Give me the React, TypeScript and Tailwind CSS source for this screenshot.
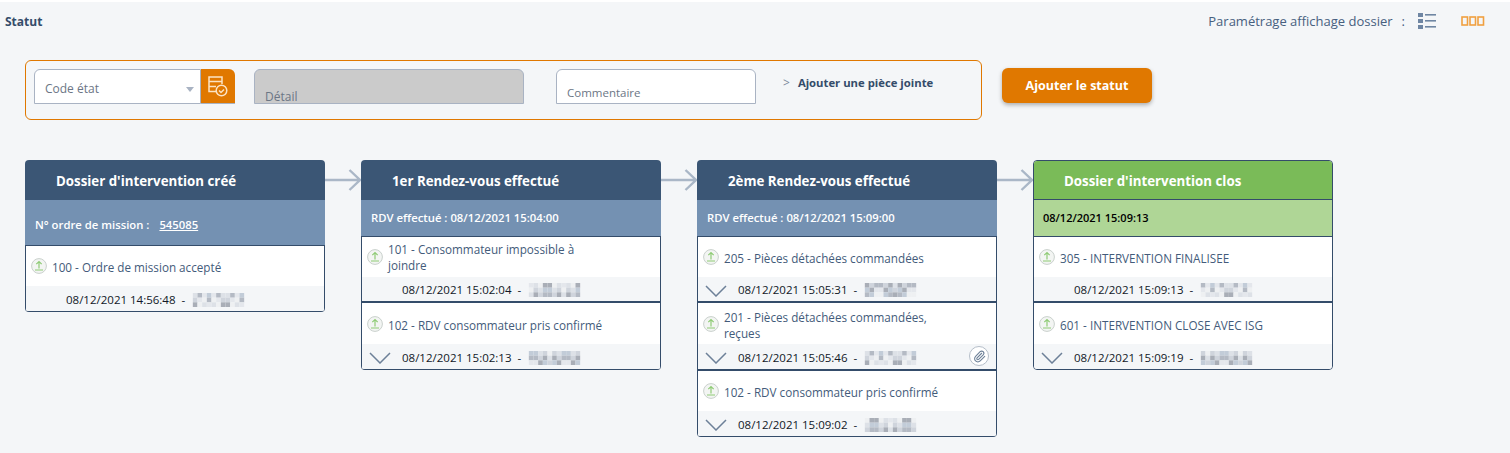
import React from 'react';
import { Paperclip } from 'lucide-react';

type Step = {
    label: string;
    date: string;
    seed: number;
    expand?: boolean;
    attach?: boolean;
    tall?: boolean;
};

type Column = {
    title: string;
    sub: React.ReactNode;
    green?: boolean;
    subTall?: boolean;
    steps: Step[];
};

const columns: Column[] = [
    {
        title: "Dossier d'intervention créé",
        subTall: true,
        sub: (
            <span className="font-semibold text-white">
                N° ordre de mission :<a className="ml-[10px] underline">545085</a>
            </span>
        ),
        steps: [{ label: '100 - Ordre de mission accepté', date: '08/12/2021 14:56:48', seed: 3 }],
    },
    {
        title: '1er Rendez-vous effectué',
        sub: <span className="font-semibold text-white">RDV effectué : 08/12/2021 15:04:00</span>,
        steps: [
            { label: '101 - Consommateur impossible à joindre', date: '08/12/2021 15:02:04', seed: 7, tall: true },
            { label: '102 - RDV consommateur pris confirmé', date: '08/12/2021 15:02:13', seed: 11, expand: true },
        ],
    },
    {
        title: '2ème Rendez-vous effectué',
        sub: <span className="font-semibold text-white">RDV effectué : 08/12/2021 15:09:00</span>,
        steps: [
            { label: '205 - Pièces détachées commandées', date: '08/12/2021 15:05:31', seed: 13, expand: true },
            { label: '201 - Pièces détachées commandées, reçues', date: '08/12/2021 15:05:46', seed: 17, expand: true, attach: true, tall: true },
            { label: '102 - RDV consommateur pris confirmé', date: '08/12/2021 15:09:02', seed: 19, expand: true },
        ],
    },
    {
        title: "Dossier d'intervention clos",
        green: true,
        sub: <span className="text-[11px] font-semibold text-black">08/12/2021 15:09:13</span>,
        steps: [
            { label: '305 - INTERVENTION FINALISEE', date: '08/12/2021 15:09:13', seed: 23 },
            { label: '601 - INTERVENTION CLOSE AVEC ISG', date: '08/12/2021 15:09:19', seed: 29, expand: true },
        ],
    },
];

// pixelated block standing in for the blurred user name
function Blurred({ seed }: { seed: number }) {
    const shades = ['#e4e7ec', '#cfd4dc', '#b4bac4', '#dde1e7', '#c2ccd8', '#eef0f2', '#a9aeb7'];
    const cells = [];
    for (let y = 0; y < 3; y++) {
        for (let x = 0; x < 11; x++) {
            const i = (x * x * 3 + y * 5 + seed * x + seed) % shades.length;
            cells.push(<rect key={`${x}-${y}`} x={x * 5} y={y * 5} width="5" height="5" fill={shades[i]} />);
        }
    }
    return (
        <svg width="55" height="14" viewBox="0 0 55 15" className="inline-block shrink-0">
            {cells}
        </svg>
    );
}

function UpIcon() {
    return (
        <svg width="16" height="16" viewBox="0 0 16 16" fill="none" className="shrink-0">
            <circle cx="8" cy="8" r="7.400" fill="#f3f5f3" stroke="#c9d0cc" />
            <path d="M8 10.500V3.500M5.300 6.200 8 3.500l2.700 2.700M4 12h8" stroke="#8fcb76" strokeWidth="1.200" />
        </svg>
    );
}

function labelPadding(step: Step, index: number) {
    if (index === 1) return 'pt-[3px]';
    if (index === 0 && step.tall) return 'pt-0';
    return 'pt-[2px]';
}

function StepRow({ step, index, count }: { step: Step; index: number; count: number }) {
    return (
        <div className={index === 0 ? '' : 'border-t-2 border-[#344c6a]'}>
            <div className={`flex items-center bg-white pl-[5px] ${index === 1 ? 'h-[41px]' : 'h-[40px]'}`}>
                <UpIcon />
                <div className={`ml-[5px] text-[11.7px] font-medium leading-[16px] text-[#435b7a] ${step.tall ? 'w-[225px]' : ''} ${labelPadding(step, index)}`}>
                    {step.label}
                </div>
            </div>
            <div className={`relative flex items-center bg-[#f4f6f8] pl-[40px] pt-[2px] text-[11.5px] text-[#111827] ${index === 0 && count > 1 ? 'h-[24px]' : 'h-[25px]'}`}>
                {step.expand && (
                    <svg width="22" height="12" viewBox="0 0 22 12" fill="none" stroke="#6d8098" strokeWidth="1.500" className="absolute left-[7px] top-[8px]">
                        <path d="M1 1l10 10 10-10" />
                    </svg>
                )}
                <span>{step.date}</span>
                <span className="mx-[6px]">-</span>
                <Blurred seed={step.seed} />
                {step.attach && (
                    <span className="absolute right-[7px] top-[2px] flex h-[20px] w-[20px] items-center justify-center rounded-full border border-[#b5bec9] bg-white">
                        <Paperclip size={13} className="text-[#6d8098]" />
                    </span>
                )}
            </div>
        </div>
    );
}

function Card({ col }: { col: Column }) {
    return (
        <div className={`w-[300px] shrink-0 overflow-hidden rounded-[4px] border-b border-[#344c6a] ${col.green ? 'border-x border-t' : ''}`}>
            <div
                className={`flex items-center pt-[4px] text-[13.3px] font-bold text-white ${
                    col.green ? 'h-[39px] border-b border-[#344c6a] bg-[#7abb58] pl-[30px]' : 'h-[40px] bg-[#3b5675] pl-[31px]'
                }`}
            >
                {col.title}
            </div>
            <div
                className={`flex items-center text-[11.3px] ${col.subTall ? 'h-[45px] pt-[6px]' : 'h-[36px] pt-[1px]'} ${
                    col.green ? 'bg-[#afd696] pl-[9px]' : 'bg-[#7491b2] pl-[10px]'
                }`}
            >
                {col.sub}
            </div>
            <div className={`border-t border-[#344c6a] ${col.green ? '' : 'border-x'}`}>
                {col.steps.map((s, i) => (
                    <StepRow key={i} step={s} index={i} count={col.steps.length} />
                ))}
            </div>
        </div>
    );
}

function Arrow() {
    return (
        <svg width="36" height="22" viewBox="0 0 36 22" fill="none" className="mt-[9px] shrink-0">
            <path d="M0 11h35M24.500 1l10.500 10-10.500 10" stroke="#aab7c7" strokeWidth="2.400" />
        </svg>
    );
}

export default function App() {
    return (
        <div className="h-[453px] w-[1510px] overflow-hidden border-t-2 border-white bg-[#f4f6f8] font-['Open_Sans',sans-serif] text-[12px]">
            <header className="flex h-[38px] items-center justify-between pl-[5px] pr-[25px]">
                <h2 className="pt-[2px] text-[12px] font-bold text-[#344c6a]">Statut</h2>
                <div className="flex items-center text-[13px] text-[#47607f]">
                    <span className="pt-[2px]">Paramétrage affichage dossier</span>
                    <span className="ml-[9px] pt-[2px]">:</span>
                    <svg width="20" height="18" viewBox="0 0 20 18" className="ml-[13px]">
                        <g fill="#6f86a3">
                            <rect x="0" y="1" width="5" height="4" />
                            <rect x="0" y="7" width="5" height="4" />
                            <rect x="0" y="13" width="5" height="4" />
                            <rect x="7" y="2" width="11" height="1.600" />
                            <rect x="7" y="8" width="11" height="1.600" />
                            <rect x="7" y="14" width="11" height="1.600" />
                        </g>
                    </svg>
                    <svg width="24" height="10" viewBox="0 0 24 10" fill="none" stroke="#f0a040" strokeWidth="1.600" className="ml-[23px]">
                        <rect x="1" y="1" width="5.500" height="8" />
                        <rect x="9" y="1" width="5.500" height="8" />
                        <rect x="17" y="1" width="5.500" height="8" />
                    </svg>
                </div>
            </header>

            <div className="ml-[25px] mt-[20px] flex items-start">
                <div className="flex h-[60px] w-[957px] items-start rounded-[6px] border border-[#e07800] pl-[8px] pt-[8px]">
                    <div className="flex h-[35px] w-[201px]">
                        <div className="flex flex-1 items-center justify-between rounded-tl-[6px] border border-[#a9b3c3] bg-white pl-[10px] pr-[6px] pt-[5px] text-[#6b7685]">
                            <span>Code état</span>
                            <span className="h-0 w-0 border-x-[4px] border-t-[5px] border-x-transparent border-t-[#a9b3c3]" />
                        </div>
                        <div className="flex w-[34px] items-center justify-center rounded-tr-[6px] border-b border-[#a9b3c3] bg-[#e07800]">
                            <svg width="20" height="21" viewBox="0 0 20 21" fill="none" stroke="#fbe3c4" strokeWidth="1.500">
                                <path d="M8 15.500H1V1h13v7M1 5.500h13M1 10.500h7" />
                                <circle cx="13.500" cy="14.500" r="5.300" />
                                <path d="M11 14.500l2 2 3-3" />
                            </svg>
                        </div>
                    </div>
                    <div className="ml-[19px] h-[35px] w-[270px] overflow-hidden rounded-t-[6px] border border-[#a9b3c3] bg-[#cbcbcb] pl-[10px] pt-[18px] text-[#6b7685]">
                        Détail
                    </div>
                    <div className="ml-[32px] flex h-[35px] w-[200px] items-end rounded-t-[6px] border border-[#a9b3c3] bg-white pb-[2px] pl-[10px] text-[11.5px] text-[#6b7685]">
                        Commentaire
                    </div>
                    <div className="ml-[27px] mt-[5px] flex items-center">
                        <span className="text-[#7c8a9c]">&gt;</span>
                        <span className="ml-[8px] text-[11.3px] font-bold text-[#344c6a]">Ajouter une pièce jointe</span>
                    </div>
                </div>
                <button className="ml-[20px] mt-[8px] h-[35px] w-[150px] rounded-[6px] bg-[#e07800] pt-[2px] text-[12.5px] font-bold text-white shadow-[0_2px_4px_rgba(0,0,0,0.3)]">
                    Ajouter le statut
                </button>
            </div>

            <div className="ml-[25px] mt-[40px] flex items-start">
                {columns.map((c, i) => (
                    <React.Fragment key={i}>
                        {i > 0 && <Arrow />}
                        <Card col={c} />
                    </React.Fragment>
                ))}
            </div>
        </div>
    );
}
